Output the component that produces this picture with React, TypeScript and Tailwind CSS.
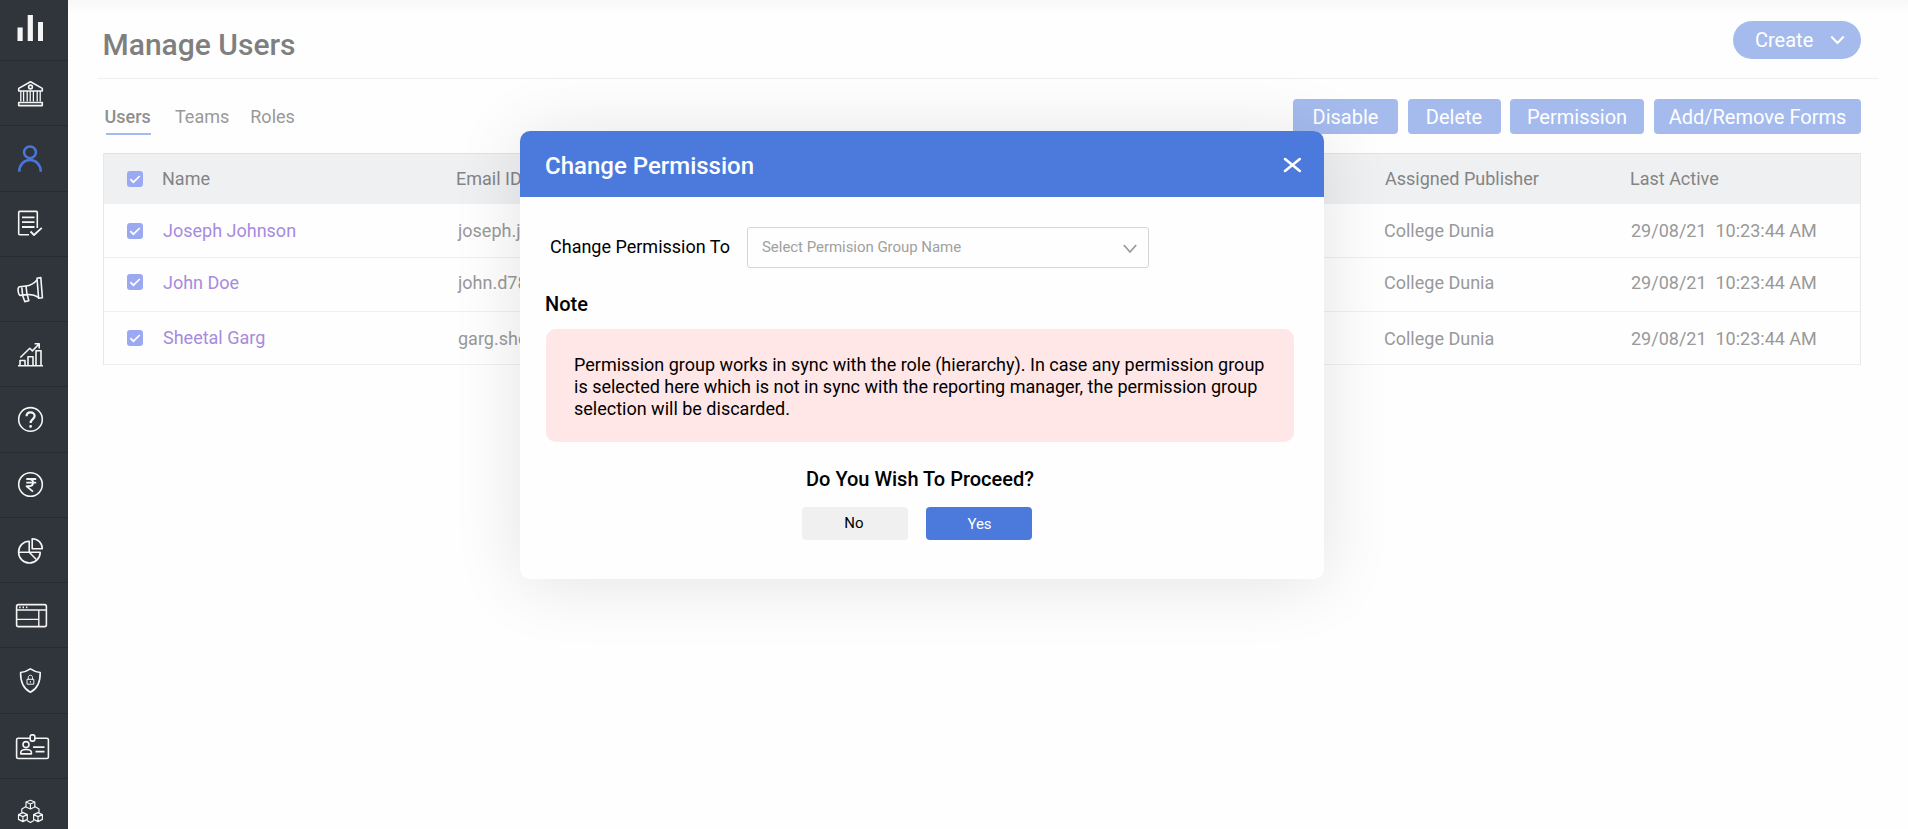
import type { ReactNode } from "react";

const navIcons: { name: string; icon: ReactNode; active?: boolean }[] = [
  {
    name: "bank",
    icon: (
      <>
        <path d="M18.7 30V27.4L30.5 20.8 42.3 27.4V30Z" />
        <circle cx="30.5" cy="26" r="1.9" />
        <path d="M20.8 30V40.5M23.6 30V40.5M27.2 30V40.5M30.2 30V40.5M33.4 30V40.5M37.2 30V40.5M40.2 30V40.5" strokeWidth="1.3" />
        <path d="M18.7 41.5H42.3V44.6H18.7Z" />
      </>
    ),
  },
  {
    name: "user",
    active: true,
    icon: (
      <>
        <circle cx="30" cy="26.3" r="5.9" />
        <path d="M19.2 45.8C19.2 38.8 23.8 34 30 34S40.8 38.8 40.8 45.8" />
      </>
    ),
  },
  {
    name: "form",
    icon: (
      <>
        <path d="M37.3 36V20.4A1 1 0 0 0 36.3 19.4H19.7A1 1 0 0 0 18.7 20.4V41.7A1 1 0 0 0 19.7 42.7H29" />
        <path d="M22 25.3H34.5M22 30.2H34.5M22 35H34.5" strokeWidth="1.8" />
        <path d="M30.5 39.5 34 43 41.8 35.8" strokeWidth="1.8" />
      </>
    ),
  },
  {
    name: "campaign",
    icon: (
      <>
        <path d="M37 21.2 40.8 20.6 42.4 40.8 38.6 41.3Z" />
        <path d="M37 23C33.5 27 30 28.6 26 29L27 37.6C31 37.4 35 38 38.4 40.4" />
        <path d="M26 29 19.6 29.8C18.3 30 17.8 32 18.2 34.4S19.4 38.5 20.6 38.4L27 37.6M21.8 29.8 22.6 38.2" />
        <path d="M22.6 38.4 24.8 44.6 28.8 43.7 27.3 37.8" />
      </>
    ),
  },
  {
    name: "growth",
    icon: (
      <>
        <path d="M18 43.8H43M20 43.5V38.5H25V43.5M28 43.5V34.8H33V43.5M36 43.5V28.7H41V43.5" />
        <path d="M20.3 35.5 29.8 26.3 32.4 28.9 38.8 22.2M34.6 21.8H39.2V26.4" />
      </>
    ),
  },
  {
    name: "help",
    icon: (
      <>
        <circle cx="30.5" cy="32.4" r="11.8" />
        <path d="M26.6 29.3C26.6 24.1 34.6 24.1 34.6 29 34.6 32.1 30.6 32.3 30.6 36.1" strokeWidth="2.2" />
        <circle cx="30.6" cy="39.4" r="0.7" strokeWidth="1.4" />
      </>
    ),
  },
  {
    name: "fees",
    icon: (
      <>
        <circle cx="30.5" cy="31.5" r="11.8" />
        <path d="M26.3 26H36.2M26.3 29.6H36.2M26.3 26H29.2C34.4 26 34.4 33.2 29.2 33.2H26.6L33 38.6" strokeWidth="1.8" />
      </>
    ),
  },
  {
    name: "reports",
    icon: (
      <>
        <path d="M29.2 23.2V34.2H40.2A10.8 10.8 0 0 1 18.6 34.2C18.6 28 23.3 23.2 29.2 23.2Z" />
        <path d="M32.2 20.7V30.7H42.3C42.3 25 38 20.7 32.2 20.7Z" />
        <path d="M18.6 34.2H29.2L36.4 41.5" />
      </>
    ),
  },
  {
    name: "website",
    icon: (
      <>
        <rect x="16.6" y="21.6" width="29.8" height="22" rx="1.8" />
        <path d="M16.6 27H46.4M38.8 27V43.6M16.6 36.4H38.8" strokeWidth="1.4" />
        <path d="M19.2 24.3H20.6M22.6 24.3H24M26 24.3H27.4" strokeWidth="1.8" />
      </>
    ),
  },
  {
    name: "security",
    icon: (
      <>
        <path d="M30.4 20.8C27.4 22.8 24 24.1 20.6 24.5C20.4 32.9 22.8 40.4 30.4 44.2C38 40.4 40.4 32.9 40.2 24.5C36.8 24.1 33.4 22.8 30.4 20.8Z" />
        <path d="M27 31.3H33.8V36.2H27ZM28.3 31.3V29.4C28.3 26.5 32.5 26.5 32.5 29.4V31.3M30.4 33V34.6" strokeWidth="1" />
      </>
    ),
  },
  {
    name: "identity",
    icon: (
      <>
        <path d="M30 24.3H18.2A1.6 1.6 0 0 0 16.6 25.9V42.9A1.6 1.6 0 0 0 18.2 44.5H46.8A1.6 1.6 0 0 0 48.4 42.9V25.9A1.6 1.6 0 0 0 46.8 24.3H35" />
        <rect x="30.2" y="20.9" width="4.6" height="6.2" rx="1.8" />
        <circle cx="26" cy="30.6" r="3" />
        <path d="M20.8 39.9V38.6C20.8 34.4 31.4 34.4 31.4 38.6V39.9ZM33 33.1H44.5M35.5 37.6H44.5" />
      </>
    ),
  },
  {
    name: "integrations",
    icon: (
      <g strokeWidth="1.2">
        <path d="M30.4 21.2 34.8 23V28L30.4 30 26 28V23ZM26 23 30.4 25 34.8 23M30.4 25V30" />
        <path d="M22.9 33.6 27.3 35.6V40.4L22.9 42.6 18.5 40.4V35.6ZM18.5 35.6 22.9 37.6 27.3 35.6M22.9 37.6V42.6" />
        <path d="M38 33.6 42.4 35.6V40.4L38 42.6 33.6 40.4V35.6ZM33.6 35.6 38 37.6 42.4 35.6M38 37.6V42.6" />
        <path d="M26 27.6 21.8 30V33.8M34.8 27.6 39 30V33.8M27 41.4 30.4 43.6 33.8 41.4" />
      </g>
    ),
  },
];

const rows = [
  { name: "Joseph Johnson", email: "joseph.j", height: "h-[54px]", pad: "pb-0", nameNudge: "", nudge: "" },
  { name: "John Doe", email: "john.d78", height: "h-[54px]", pad: "pb-[6px]", nameNudge: "pt-[2px]", nudge: "pt-[2px]" },
  { name: "Sheetal Garg", email: "garg.she", height: "h-[53px]", pad: "pb-0", nameNudge: "pb-[2px]", nudge: "" },
];

const columns = "grid grid-cols-[23px_36px_294px_928px_245px_1fr] items-center";

function Check() {
  return (
    <span className="col-start-2 flex size-4 items-center justify-center rounded-[3px] bg-[#9ba9f3]">
      <svg width="16" height="16" viewBox="0 0 16 16" fill="none" stroke="#fff" strokeWidth="1.7">
        <path d="M3.3 8.2 6.4 11.2 12.8 5" />
      </svg>
    </span>
  );
}

function Sidebar() {
  return (
    <nav className="flex h-full w-[68px] shrink-0 flex-col overflow-hidden bg-[#2f353b]">
      <div className="h-[61px] shrink-0 border-b border-[#272c31]">
        <svg width="68" height="60" viewBox="0 0 68 60" fill="#f5f5f5">
          <path d="M17.5 27.5H22.7V41H17.5ZM27.7 15H32.9V41H27.7ZM38 22H43V41H38Z" />
        </svg>
      </div>
      {navIcons.map(({ name, icon, active }) => (
        <div key={name} className="h-[65.25px] shrink-0 border-b border-[#272c31]">
          <svg
            width="68"
            height="64"
            viewBox="0 0 68 64"
            fill="none"
            stroke={active ? "#4a76dc" : "#f5f5f5"}
            strokeWidth={active ? 2.5 : 1.6}
            strokeLinejoin="round"
          >
            {icon}
          </svg>
        </div>
      ))}
    </nav>
  );
}

function Modal() {
  return (
    <section className="absolute left-[520px] top-[131px] flex h-[448px] w-[804px] flex-col overflow-visible rounded-[10px] bg-[#fefefe] text-black shadow-[0_4px_70px_rgba(0,0,0,0.11)]">
      <header className="flex h-[66px] shrink-0 items-center justify-between rounded-t-[10px] bg-[#4b7adc] pl-[25px] pr-[22px] text-white">
        <h2 className="pt-[3px] text-[24px] font-medium leading-7">Change Permission</h2>
        <svg className="mt-[2px]" width="19" height="16" viewBox="0 0 19 16" fill="none" stroke="#fff" strokeWidth="2.6" strokeLinecap="round">
          <path d="M2 2.1 16.8 13.9M16.8 2.1 2 13.9" />
        </svg>
      </header>
      <div className="mt-[30px] flex h-[41px] items-center pl-[30px]">
        <label className="w-[197px] pb-[2px] text-[18px] leading-5">Change Permission To</label>
        <div className="flex h-[41px] w-[402px] items-center justify-between rounded-[3px] border border-[#d6d6d6] pl-[14px] pr-[10px] text-[15px] tracking-[-0.04px] text-[#a0a0a0]">
          <span>Select Permision Group Name</span>
          <svg className="mt-[3px]" width="16" height="12" viewBox="0 0 16 12" fill="none" stroke="#9b9b9b" strokeWidth="1.8">
            <path d="M1.8 2 8 9 14.2 2" />
          </svg>
        </div>
      </div>
      <h3 className="mt-[24px] pl-[25px] text-[20px] font-medium leading-6">Note</h3>
      <p className="ml-[26px] mt-[13px] h-[113px] w-[748px] whitespace-nowrap rounded-[10px] bg-[#fee7e6] pl-[28px] pt-[25px] text-[18px] leading-[22px]">
        Permission group works in sync with the role (hierarchy). In case any permission group
        <br />
        is selected here which is not in sync with the reporting manager, the permission group
        <br />
        selection will be discarded.
      </p>
      <h3 className="mt-[25px] pl-[286px] text-[20px] font-medium leading-6">Do You Wish To Proceed?</h3>
      <div className="mt-[16px] flex gap-[18px] pl-[282px] text-[15px]">
        <button className="h-[33px] w-[106px] rounded bg-[#f0f0f0] pb-[1px] pr-[2px]">No</button>
        <button className="h-[33px] w-[106px] rounded bg-[#4b7adc] pl-[1px] pt-[1px] text-white">Yes</button>
      </div>
    </section>
  );
}

export default function App() {
  return (
    <div className="relative flex h-[829px] w-[1908px] overflow-hidden bg-[#fefefe] font-[Roboto,sans-serif] text-[18px] text-[#999]">
      <Sidebar />
      <main className="flex grow flex-col bg-linear-to-b from-[#f8f8f8] to-[#fefefe] to-[14px]">
        <header className="ml-[30px] mr-[30px] flex h-[79px] justify-between border-b border-[#efefef] pl-[4.5px] pr-[17px]">
          <h1 className="pt-[27px] text-[30px] font-medium leading-9 text-[#7f7f7f]">Manage Users</h1>
          <button className="mt-[21px] flex h-[38px] w-[128px] items-center justify-between rounded-[19px] bg-[#a5bbee] pl-[22px] pr-[16px] text-[20px] text-white">
            Create
            <svg width="15" height="10" viewBox="0 0 15 10" fill="none" stroke="#fff" strokeWidth="2">
              <path d="M1.3 1.5 7.5 8 13.7 1.5" />
            </svg>
          </button>
        </header>
        <div className="mt-5 flex h-[54px] justify-between pl-[37px] pr-[47px]">
          <div className="flex gap-[24px] pt-[7px] leading-[22px]">
            <div className="flex w-[46px] flex-col text-[#8f8f8f]">
              <span className="-ml-[0.5px] font-medium">Users</span>
              <span className="ml-[1px] mt-[5px] h-[2px] w-[45px] bg-[#a3bbf0]" />
            </div>
            <span>Teams</span>
            <span className="-ml-[3px]">Roles</span>
          </div>
          <div className="flex text-[20px] text-white">
            <button className="mr-[10px] h-[35px] w-[105px] rounded bg-[#a5bbee]">Disable</button>
            <button className="mr-[9px] h-[35px] w-[93px] rounded bg-[#a5bbee] pr-[1px]">Delete</button>
            <button className="mr-[10px] h-[35px] w-[134px] rounded bg-[#a5bbee]">Permission</button>
            <button className="h-[35px] w-[207px] rounded bg-[#a5bbee]">Add/Remove Forms</button>
          </div>
        </div>
        <div className="ml-[35px] w-[1758px] border-x border-[#e8e8e9]">
          <div className={`${columns} h-[51px] border-t border-[#e0e1e3] bg-[#eff0f2] text-[#838485]`}>
            <Check />
            <span className="-ml-[1px] pb-[2px]">Name</span>
            <span className="-ml-[1px] pb-[2px]">Email ID</span>
            <span className="pb-[2px]">Assigned Publisher</span>
            <span className="pb-[2px]">Last Active</span>
          </div>
          {rows.map((row) => (
            <div key={row.name} className={`${columns} ${row.height} ${row.pad} border-b border-[#efefef]`}>
              <Check />
              <span className={`text-[#a68be0] ${row.nameNudge}`}>{row.name}</span>
              <span className={`pl-[1px] ${row.nudge}`}>{row.email}</span>
              <span className={`-ml-[1px] ${row.nudge}`}>College Dunia</span>
              <span className={`whitespace-pre pl-[1px] ${row.nudge}`}>{"29/08/21  10:23:44 AM"}</span>
            </div>
          ))}
        </div>
      </main>
      <Modal />
    </div>
  );
}
